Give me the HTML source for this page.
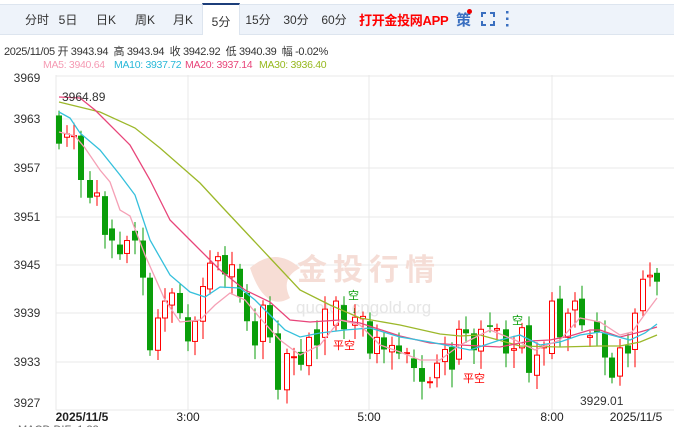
<!DOCTYPE html>
<html><head><meta charset="utf-8"><style>
*{margin:0;padding:0;box-sizing:border-box}
body{width:674px;height:427px;overflow:hidden;background:#fff;font-family:"Liberation Sans","Noto Sans CJK SC",sans-serif;position:relative}
.bar{position:absolute;left:0;top:4px;width:674px;height:31px;background:#eef3fa;border-top:1px solid #dde5ef;border-bottom:1px solid #dde5ef}
.tab{position:absolute;top:11px;font-size:12px;color:#333;transform:translateX(-50%)}
.act{position:absolute;left:202px;top:3px;width:38px;height:32px;background:#fff;border-top:2px solid #1c3e7a;border-left:1px solid #dde5ef;border-right:1px solid #dde5ef}
.t{position:absolute;white-space:nowrap}
</style></head><body>
<div class="bar"></div>
<div class="act"></div>
<span class="tab" style="left:37px">分时</span>
<span class="tab" style="left:68px">5日</span>
<span class="tab" style="left:106px">日K</span>
<span class="tab" style="left:145px">周K</span>
<span class="tab" style="left:183px">月K</span>
<span class="tab" style="left:221px;top:13px">5分</span>
<span class="tab" style="left:258px">15分</span>
<span class="tab" style="left:296px">30分</span>
<span class="tab" style="left:334px">60分</span>
<span class="t" style="left:359px;top:10px;font-size:13px;font-weight:bold;color:#f00;letter-spacing:-0.3px">打开金投网APP</span>
<span class="t" style="left:456px;top:9px;font-size:15px;color:#3a6fc0;font-weight:bold">策</span>
<span style="position:absolute;left:467px;top:9px;width:5px;height:5px;border-radius:50%;background:#e00"></span>
<svg style="position:absolute;left:480px;top:11px" width="40" height="16"><path d="M2 6V2h4M10 2h4v4M14 10v4h-4M6 14H2v-4" stroke="#3a6fc0" stroke-width="2" fill="none"/><rect x="26" y="0" width="2.5" height="2.5" fill="#3a6fc0"/><rect x="26" y="6.5" width="2.5" height="2.5" fill="#3a6fc0"/><rect x="26" y="13" width="2.5" height="2.5" fill="#3a6fc0"/></svg>
<span class="t" style="left:4px;top:43px;font-size:11px;color:#333;letter-spacing:-0.35px">2025/11/05 开 3943.94 &nbsp;高 3943.94 &nbsp;收 3942.92 &nbsp;低 3940.39 &nbsp;幅 -0.02%</span>
<span class="t" style="left:43px;top:59px;font-size:10.5px;color:#f59ab3;letter-spacing:-0.3px">MA5: 3940.64</span>
<span class="t" style="left:114px;top:59px;font-size:10.5px;color:#28b8d8;letter-spacing:-0.3px">MA10: 3937.72</span>
<span class="t" style="left:185px;top:59px;font-size:10.5px;color:#e8457a;letter-spacing:-0.3px">MA20: 3937.14</span>
<span class="t" style="left:259px;top:59px;font-size:10.5px;color:#96b81e;letter-spacing:-0.3px">MA30: 3936.40</span>
<svg id="c" style="position:absolute;left:0;top:0" width="674" height="427"></svg>
<script>
var s='';
var ys=[71,119,168,217,265,313,362,410],lb=[3969,3963,3957,3951,3945,3939,3933,3927];
for(var i=0;i<8;i++){var ly=ys[i]+(i==0?5:0);s+='<line x1="56" x2="674" y1="'+ly+'" y2="'+ly+'" stroke="#e8e8e8"/>';s+='<text x="27" y="'+(i==0?82:(i==7?407:ys[i]+4))+'" font-size="12" fill="#333" text-anchor="middle">'+lb[i]+'</text>';}
[188,369,552].forEach(function(x){s+='<line x1="'+x+'" x2="'+x+'" y1="75" y2="410" stroke="#e8e8e8"/>'});
s+='<line x1="56" x2="56" y1="75" y2="410" stroke="#e8e8e8"/>';
s+='<path d="M250 268 q25 -22 50 0 q-20 10 -10 30 q-25 15 -40 -30z" fill="#f7ddd5"/>';
s+='<text x="297" y="280" font-size="30" font-weight="bold" fill="#f5ddd6" letter-spacing="6">金投行情</text>';
s+='<text x="296" y="313" font-size="17" fill="#e6e6e6">quotes.cngold.org</text>';
function Y(p){return 410-(p-3927)*8.07}
var C=[[59,3963.5,3960],[67,3960.8,3961.2],[74,3961,3961],[81,3961,3955.5],[90,3955.5,3953.3],[97,3953.5,3953.9],[105,3953.5,3948.7],[112,3949.5,3948],[120,3947.5,3946.3],[127,3946.4,3948],[135,3949.2,3948],[143,3948,3943.4],[150,3943.4,3934.4],[158,3934.4,3938.4],[165,3938.4,3940.5],[172,3940,3941.5],[180,3941.5,3939],[188,3938.5,3935.5],[195,3935.5,3938],[203,3938,3942.3],[210,3942,3945.2],[218,3945.5,3946],[225,3946.2,3943.8],[232,3943.5,3945],[240,3944.5,3941],[247,3941.5,3938],[255,3938,3935],[263,3935.5,3940],[270,3940,3936],[278,3936.5,3929.5],[287,3929.5,3934],[294,3933.5,3933.6],[301,3934.2,3932.6],[309,3932.5,3936],[317,3937,3935],[325,3936,3939.5],[336,3937.5,3940.5],[344,3940,3937],[355,3937.5,3938.5],[363,3938.3,3938.6],[370,3938,3934],[377,3934,3936],[384,3936,3934.5],[392,3934.2,3935],[399,3935,3934],[407,3934,3934.1],[414,3933.4,3932.2],[422,3932.2,3930.5],[430,3930.4,3930.5],[437,3931,3932.8],[445,3933,3934.5],[452,3934.8,3932],[459,3933.3,3937],[466,3937,3936.5],[474,3936.5,3934.4],[481,3934.3,3937],[490,3937.5,3937.3],[497,3936.9,3937.1],[506,3937,3934],[514,3934.4,3934.6],[522,3934.7,3937.2],[529,3937.5,3931.6],[537,3931.3,3933.8],[544,3934.7,3934.9],[552,3934,3940.5],[560,3940.8,3936],[568,3936,3939],[575,3939.4,3940.5],[582,3940.8,3937.5],[590,3936,3936.2],[597,3938,3936.6],[605,3936.5,3933.5],[612,3933.5,3931],[620,3931.2,3934.7],[628,3935,3934],[635,3934.5,3939],[643,3939.3,3943.2],[650,3943.5,3943.7],[657,3944,3942.9]];
C.forEach(function(c,i){var up=c[2]>=c[1],col=up?'#f00':'#0a9e0a';var hi=Math.max(c[1],c[2])+0.6+(i%3)*0.5,lo=Math.min(c[1],c[2])-0.7-(i%4)*0.5;
var x=c[0];s+='<line x1="'+x+'" x2="'+x+'" y1="'+Y(hi)+'" y2="'+Y(lo)+'" stroke="'+col+'"/>';
var t=Y(Math.max(c[1],c[2])),h=Math.max(1,Y(Math.min(c[1],c[2]))-t);
if(up)s+='<rect x="'+(x-2.5)+'" y="'+t+'" width="5" height="'+h+'" fill="#fff" stroke="'+col+'"/>';else s+='<rect x="'+(x-3)+'" y="'+t+'" width="6" height="'+h+'" fill="'+col+'"/>';});
function L(p,c){s+='<polyline fill="none" stroke="'+c+'" stroke-width="1.3" points="'+p+'"/>'}
L('59,102 100,112 135,128 160,148 200,183 225,210 270,258 300,290 330,305 360,318 400,325 440,334 460,336 480,335 520,346 560,347 600,346 620,346 640,342 657,335','#9cb82a');
L('59,97 80,98 95,110 130,145 150,180 170,220 190,240 220,270 245,290 270,302 290,320 310,322 340,320 360,323 400,336 430,343 460,345 500,347 530,341 550,340 570,336 590,330 600,330 620,337 640,332 657,327','#e8457a');
L('59,112 70,118 80,133 100,150 120,175 135,195 150,240 170,275 190,292 205,297 220,287 240,288 255,300 270,315 285,330 300,337 320,333 345,330 370,328 400,337 430,342 470,350 500,340 520,335 540,345 560,342 580,335 600,332 630,340 645,333 657,324','#35c0dc');
L('59,132 75,136 85,148 100,170 110,182 120,210 130,216 145,255 165,300 180,322 200,320 215,305 230,293 245,300 260,318 280,340 300,355 320,345 340,320 360,325 380,345 400,352 420,360 440,360 460,345 490,330 515,340 535,350 560,340 580,318 600,322 620,335 632,332 645,314 657,298','#f5a0b5');
s+='<text x="62" y="101" font-size="12" fill="#333">3964.89</text>';
s+='<text x="580" y="405" font-size="12" fill="#333">3929.01</text>';
s+='<text x="348" y="299" font-size="11" fill="#0a9e0a">空</text><text x="352" y="313" font-size="9" fill="#0a9e0a">↓</text>';
s+='<text x="512" y="324" font-size="11" fill="#0a9e0a">空</text>';
s+='<text x="333" y="349" font-size="11" fill="#f00">平空</text>';
s+='<text x="463" y="382" font-size="11" fill="#f00">平空</text>';
s+='<g font-size="12" fill="#222" text-anchor="middle"><text x="82" y="421" font-weight="bold">2025/11/5</text><text x="188" y="421">3:00</text><text x="369" y="421">5:00</text><text x="552" y="421">8:00</text><text x="636" y="421">2025/11/5</text></g>';
s+='<text x="18" y="433" font-size="11" fill="#666">MACD DIF: 1.33</text>';
document.getElementById('c').innerHTML=s;
</script>
</body></html>
